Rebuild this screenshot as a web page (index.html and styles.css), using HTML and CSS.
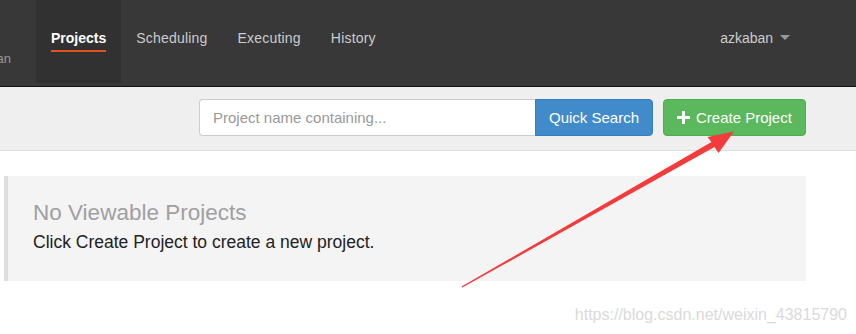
FILE: index.html
```html
<!DOCTYPE html>
<html lang="en">
<head>
  <meta charset="UTF-8">
  <title>Azkaban - Projects</title>
  <link rel="stylesheet" href="styles.css">
</head>
<body>
  <nav class="navbar">
    <div class="brand"><span>Azkaban</span></div>
    <ul class="nav-links">
      <li class="active"><a href="#"><span>Projects</span></a></li>
      <li><a href="#"><span>Scheduling</span></a></li>
      <li><a href="#"><span>Executing</span></a></li>
      <li><a href="#"><span>History</span></a></li>
    </ul>
    <div class="user-menu">azkaban <span class="caret"></span></div>
  </nav>

  <div class="subheader">
    <form class="search-form">
      <input type="text" class="search-input" placeholder="Project name containing...">
      <button type="button" class="btn btn-search">Quick Search</button>
    </form>
    <button type="button" class="btn btn-create">
      <svg class="plus-icon" width="13" height="13" viewBox="0 0 13 13"><path d="M5 0h3v5h5v3H8v5H5V8H0V5h5z" fill="#fff"/></svg>
      Create Project
    </button>
  </div>

  <div class="content">
    <div class="callout">
      <h2>No Viewable Projects</h2>
      <p>Click Create Project to create a new project.</p>
    </div>
  </div>

  <!-- annotation arrow over the screenshot -->
  <svg class="arrow" width="856" height="334" viewBox="0 0 856 334">
    <polygon points="461.6,286.6 711.5,141.9 707.5,137 734,131.5 718.5,153 714.5,147.1 462.4,287.6" fill="#f43b3b"/>
  </svg>
  <div class="watermark">https://blog.csdn.net/weixin_43815790</div>
</body>
</html>
```

FILE: styles.css
```css
body {
  font-family: "Liberation Sans", Arial, sans-serif;
  margin: 0;
  padding: 0;
  background-color: #fff;
  color: #333;
  position: relative;
  width: 856px;
  height: 334px;
  overflow: hidden;
}

.navbar {
  display: flex;
  align-items: flex-start;
  height: 86px;
  background-color: #383838;
  border-bottom: 1px solid #111;
}

.brand {
  width: 36px;
  height: 83px;
  display: flex;
  justify-content: flex-end;
  overflow: hidden;
  font-size: 13px;
  color: #999;
}

  .brand span {
    padding: 51px 25px 0 0;
    white-space: nowrap;
  }

.nav-links {
  display: flex;
  list-style: none;
  margin: 0;
  padding: 0;
}

  .nav-links a {
    display: block;
    height: 83px;
    box-sizing: border-box;
    padding: 28px 15px 0;
    font-size: 14px;
    line-height: 20px;
    letter-spacing: 0.2px;
    color: #ccc;
    text-decoration: none;
  }

  .nav-links a span {
    display: inline-block;
    padding-bottom: 2px;
  }

  .nav-links .active a {
    background-color: #313131;
    color: #fff;
    font-weight: bold;
    letter-spacing: 0;
  }

  .nav-links .active a span {
    border-bottom: 2px solid #e2521f;
  }

.user-menu {
  margin-left: auto;
  padding: 28px 66px 0 0;
  font-size: 14px;
  line-height: 20px;
  color: #ccc;
}

.caret {
  display: inline-block;
  width: 0;
  height: 0;
  margin-left: 3px;
  vertical-align: 3px;
  border-left: 5px solid transparent;
  border-right: 5px solid transparent;
  border-top: 5px solid #999;
}

.subheader {
  display: flex;
  justify-content: flex-end;
  gap: 10px;
  height: 64px;
  box-sizing: border-box;
  padding: 12px 50px 0 0;
  background-color: #efefef;
  border-bottom: 1px solid #dcdcdc;
}

.search-form {
  display: flex;
  margin: 0;
}

.search-input {
  width: 336px;
  height: 37px;
  box-sizing: border-box;
  padding: 0 13px;
  font-family: inherit;
  font-size: 15px;
  color: #555;
  border: 1px solid #ccc;
  border-right: none;
  border-radius: 4px 0 0 4px;
  background-color: #fff;
}

  .search-input::placeholder {
    color: #999;
  }

.btn {
  height: 37px;
  box-sizing: border-box;
  font-family: inherit;
  font-size: 15px;
  color: #fff;
  border: 1px solid transparent;
  border-radius: 4px;
  cursor: pointer;
}

.btn-search {
  width: 118px;
  background-color: #428bca;
  border-color: #357ebd;
  border-radius: 0 4px 4px 0;
}

.btn-create {
  display: flex;
  align-items: center;
  gap: 6px;
  width: 143px;
  padding: 0 0 0 13px;
  background-color: #5cb85c;
  border-color: #4cae4c;
}

.plus-icon {
  flex-shrink: 0;
}

.content {
  padding: 25px 0 0 4px;
}

.callout {
  width: 802px;
  height: 105px;
  box-sizing: border-box;
  padding: 25px 25px 0;
  background-color: #f4f4f4;
  border-left: 4px solid #dedede;
}

  .callout h2 {
    margin: 0 0 6px;
    font-size: 22.5px;
    line-height: 24px;
    font-weight: normal;
    color: #a0a0a0;
  }

  .callout p {
    margin: 0;
    font-size: 17.5px;
    line-height: 22px;
    color: #222;
  }

.arrow {
  position: absolute;
  top: 0;
  left: 0;
  pointer-events: none;
}

.watermark {
  position: absolute;
  top: 306px;
  right: 9px;
  font-size: 16px;
  color: #dadada;
  pointer-events: none;
}
```
